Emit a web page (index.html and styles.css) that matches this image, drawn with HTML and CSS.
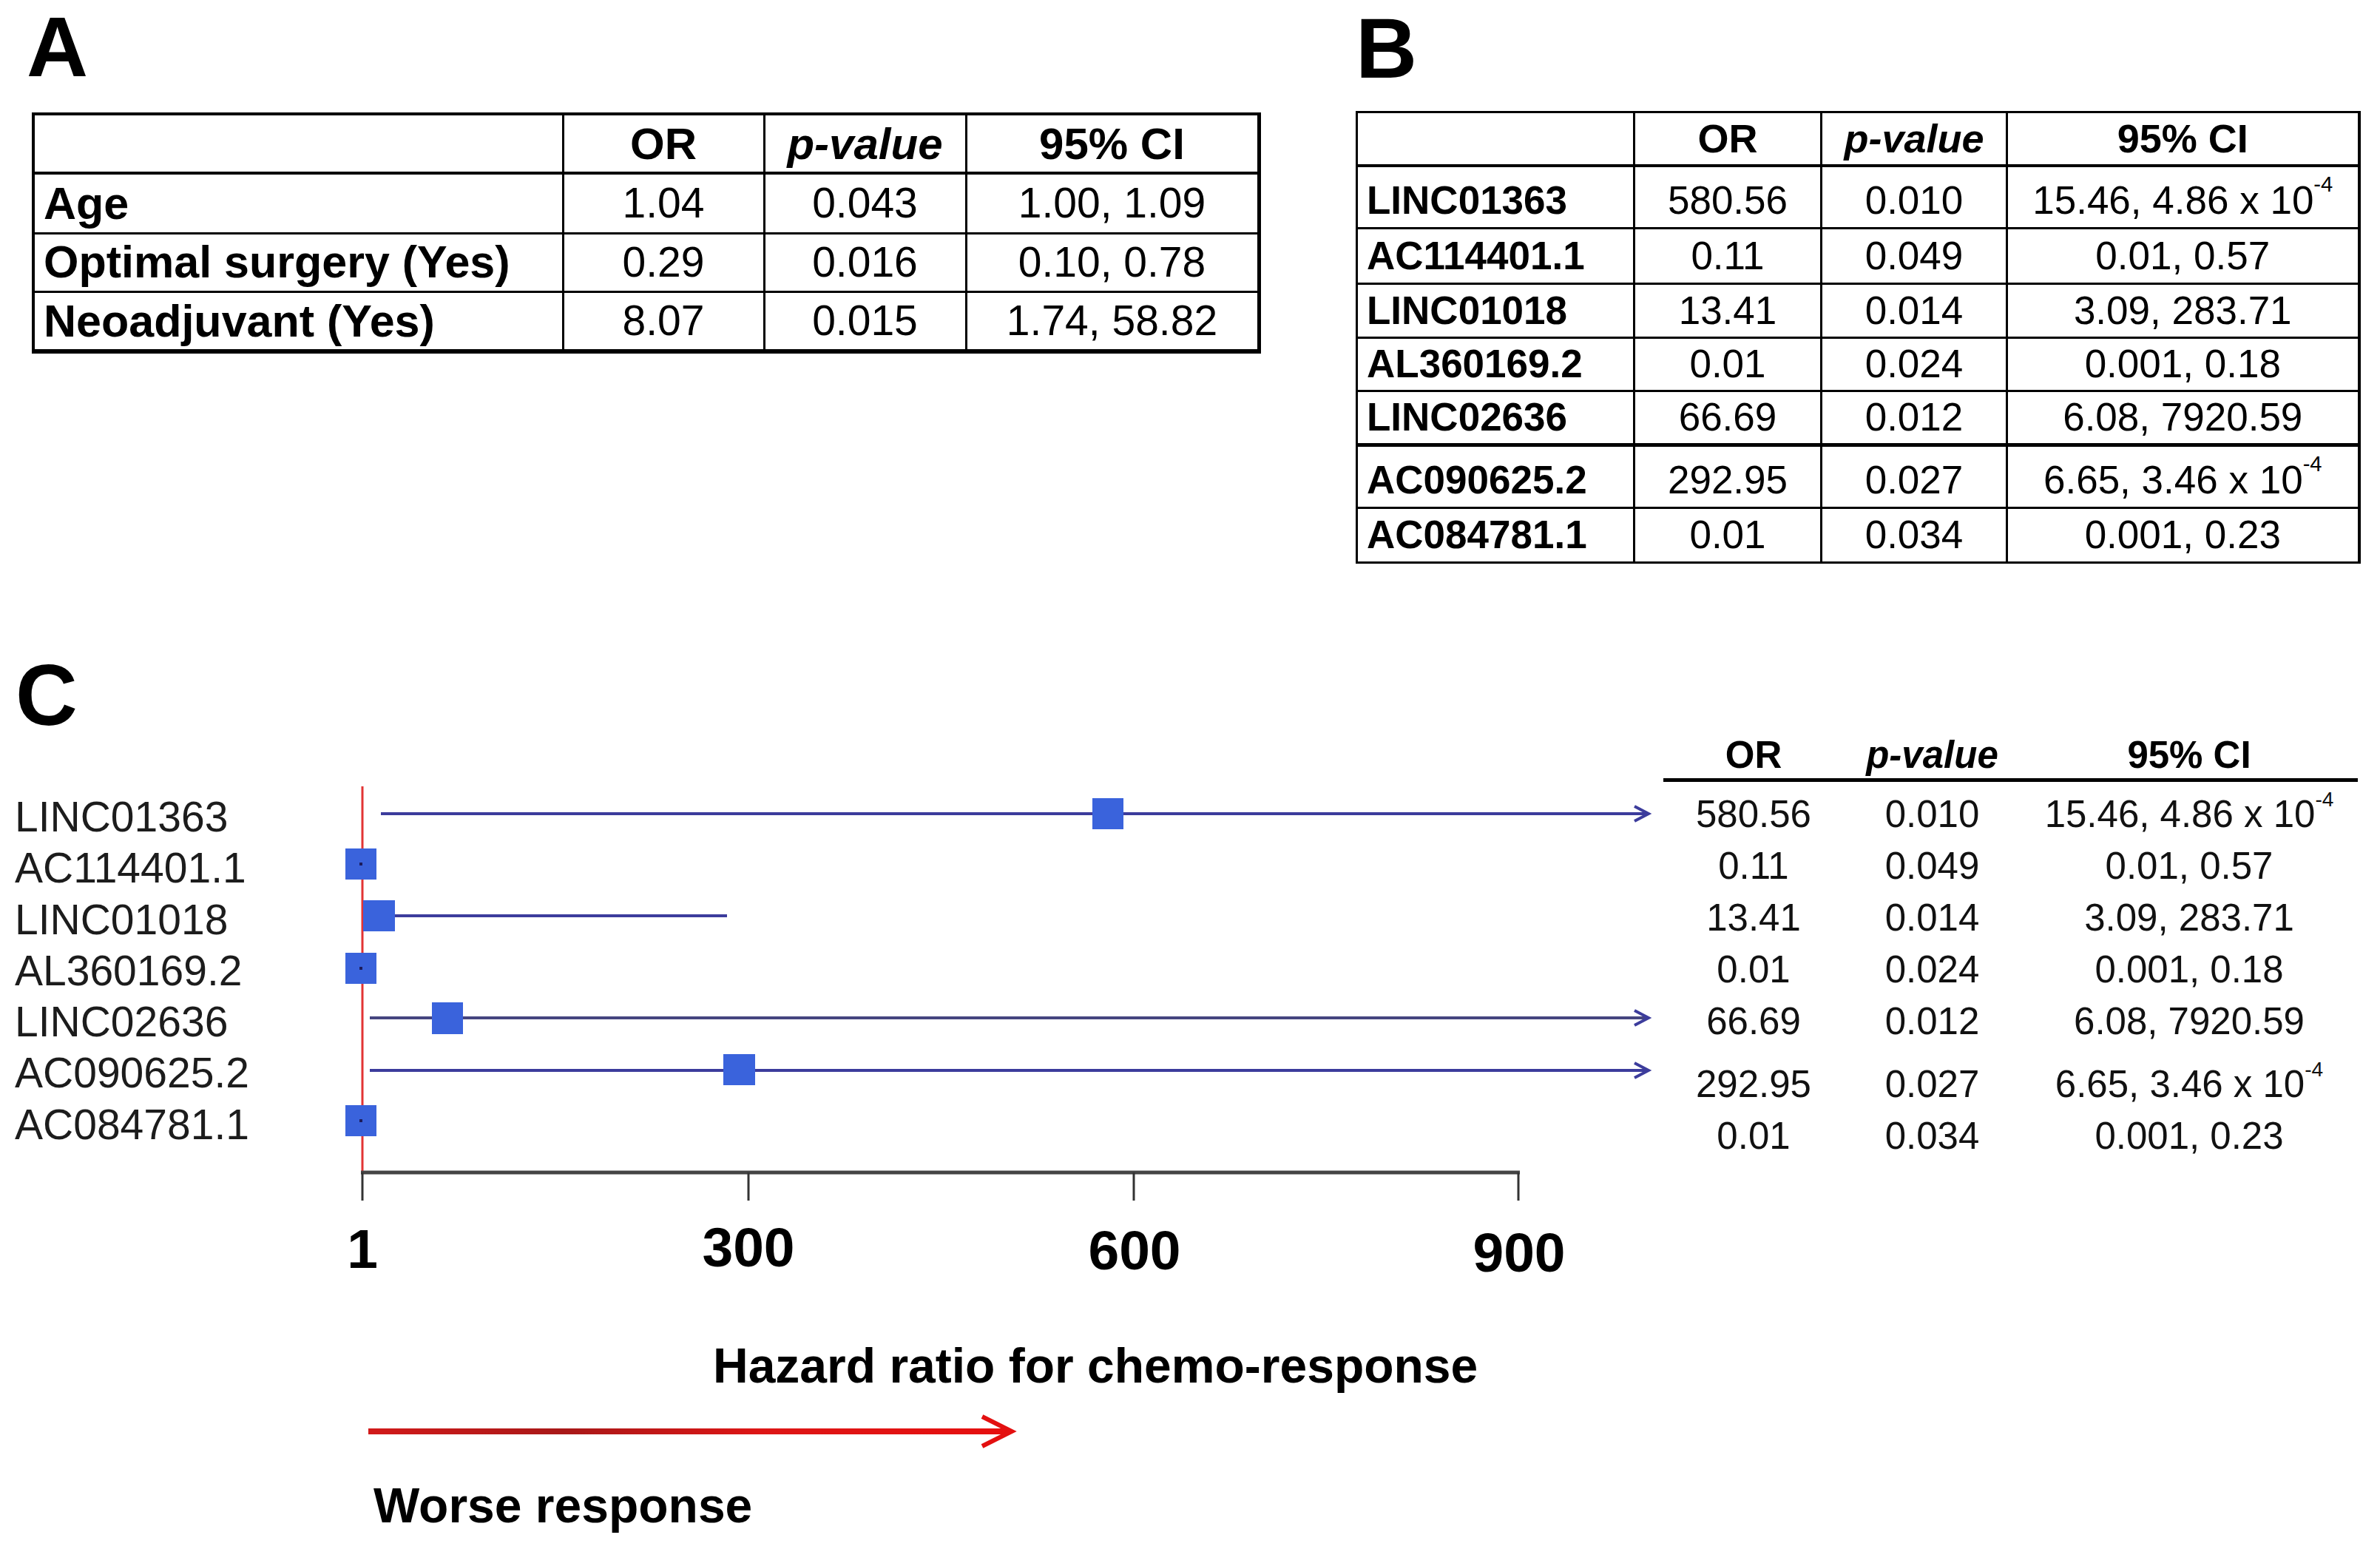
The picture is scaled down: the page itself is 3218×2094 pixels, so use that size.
FILE: index.html
```html
<!DOCTYPE html>
<html lang="en">
<head>
<meta charset="utf-8">
<title>Odds ratios and forest plot</title>
<link rel="stylesheet" href="styles.css">
</head>
<body>
<div class="top">
  <section class="panel-a">
    <div class="letter">A</div>
    <table class="tbl tbl-a">
      <colgroup><col class="ca1"><col class="ca2"><col class="ca3"><col class="ca4"></colgroup>
      <thead>
        <tr class="ha"><th></th><th>OR</th><th class="it">p-value</th><th>95% CI</th></tr>
      </thead>
      <tbody>
        <tr class="ra1"><td class="lbl">Age</td><td>1.04</td><td>0.043</td><td>1.00, 1.09</td></tr>
        <tr class="ra2"><td class="lbl">Optimal surgery (Yes)</td><td>0.29</td><td>0.016</td><td>0.10, 0.78</td></tr>
        <tr class="ra3"><td class="lbl">Neoadjuvant (Yes)</td><td>8.07</td><td>0.015</td><td>1.74, 58.82</td></tr>
      </tbody>
    </table>
  </section>
  <section class="panel-b">
    <div class="letter">B</div>
    <table class="tbl tbl-b">
      <colgroup><col class="cb1"><col class="cb2"><col class="cb3"><col class="cb4"></colgroup>
      <thead>
        <tr class="hb"><th></th><th>OR</th><th class="it">p-value</th><th>95% CI</th></tr>
      </thead>
      <tbody>
        <tr class="rb1 suprow"><td class="lbl">LINC01363</td><td>580.56</td><td>0.010</td><td>15.46, 4.86 x 10<span class="sup">-4</span></td></tr>
        <tr class="rb2"><td class="lbl">AC114401.1</td><td>0.11</td><td>0.049</td><td>0.01, 0.57</td></tr>
        <tr class="rb3"><td class="lbl">LINC01018</td><td>13.41</td><td>0.014</td><td>3.09, 283.71</td></tr>
        <tr class="rb4"><td class="lbl">AL360169.2</td><td>0.01</td><td>0.024</td><td>0.001, 0.18</td></tr>
        <tr class="rb5"><td class="lbl">LINC02636</td><td>66.69</td><td>0.012</td><td>6.08, 7920.59</td></tr>
        <tr class="rb6 suprow thick"><td class="lbl">AC090625.2</td><td>292.95</td><td>0.027</td><td>6.65, 3.46 x 10<span class="sup">-4</span></td></tr>
        <tr class="rb7"><td class="lbl">AC084781.1</td><td>0.01</td><td>0.034</td><td>0.001, 0.23</td></tr>
      </tbody>
    </table>
  </section>
</div>

<section class="panel-c">
  <div class="letter">C</div>
  <div class="chart-row">
    <div class="labels">
      <div>LINC01363</div>
      <div>AC114401.1</div>
      <div>LINC01018</div>
      <div>AL360169.2</div>
      <div>LINC02636</div>
      <div>AC090625.2</div>
      <div>AC084781.1</div>
    </div>
    <svg class="plot" width="1809" height="743" viewBox="0 0 1809 743" xmlns="http://www.w3.org/2000/svg">
      <line class="ref" x1="50" y1="65" x2="50" y2="587"/>
      <!-- LINC01363 -->
      <line class="ci" x1="75" y1="102" x2="1787" y2="102"/>
      <polyline class="ci-head" points="1770,92 1789,102 1770,112"/>
      <rect class="pt" x="1037" y="81" width="42" height="42"/>
      <!-- AC114401.1 -->
      <rect class="pt" x="27" y="149" width="42" height="42"/>
      <rect class="dot" x="46" y="168" width="4" height="4"/>
      <!-- LINC01018 -->
      <line class="ci" x1="73" y1="240" x2="543" y2="240"/>
      <rect class="pt" x="51" y="219" width="43" height="42"/>
      <!-- AL360169.2 -->
      <rect class="pt" x="27" y="290" width="42" height="42"/>
      <rect class="dot" x="46" y="309" width="4" height="4"/>
      <!-- LINC02636 -->
      <line class="ci ci-grey" x1="60" y1="378" x2="1787" y2="378"/>
      <polyline class="ci-head" points="1770,368 1789,378 1770,388"/>
      <rect class="pt" x="144" y="357" width="42" height="43"/>
      <!-- AC090625.2 -->
      <line class="ci" x1="60" y1="449" x2="1787" y2="449"/>
      <polyline class="ci-head" points="1770,439 1789,449 1770,459"/>
      <rect class="pt" x="538" y="427" width="43" height="42"/>
      <!-- AC084781.1 -->
      <rect class="pt" x="27" y="496" width="42" height="42"/>
      <rect class="dot" x="46" y="515" width="4" height="4"/>
      <!-- axis -->
      <line class="axis" x1="48" y1="587" x2="1615" y2="587"/>
      <line class="tickline" x1="50" y1="587" x2="50" y2="625"/>
      <line class="tickline" x1="572" y1="587" x2="572" y2="625"/>
      <line class="tickline" x1="1093" y1="587" x2="1093" y2="625"/>
      <line class="tickline" x1="1613" y1="587" x2="1613" y2="625"/>
      <text class="tick" x="50" y="716">1</text>
      <text class="tick" x="572" y="714">300</text>
      <text class="tick" x="1094" y="718">600</text>
      <text class="tick" x="1614" y="721">900</text>
    </svg>
    <table class="ctbl">
      <colgroup><col class="cc1"><col class="cc2"><col class="cc3"></colgroup>
      <thead>
        <tr><th>OR</th><th class="it">p-value</th><th>95% CI</th></tr>
      </thead>
      <tbody>
        <tr class="first"><td>580.56</td><td>0.010</td><td>15.46, 4.86 x 10<span class="sup">-4</span></td></tr>
        <tr><td>0.11</td><td>0.049</td><td>0.01, 0.57</td></tr>
        <tr><td>13.41</td><td>0.014</td><td>3.09, 283.71</td></tr>
        <tr><td>0.01</td><td>0.024</td><td>0.001, 0.18</td></tr>
        <tr><td>66.69</td><td>0.012</td><td>6.08, 7920.59</td></tr>
        <tr class="tall"><td>292.95</td><td>0.027</td><td>6.65, 3.46 x 10<span class="sup">-4</span></td></tr>
        <tr><td>0.01</td><td>0.034</td><td>0.001, 0.23</td></tr>
      </tbody>
    </table>
  </div>
  <div class="axis-title">Hazard ratio for chemo-response</div>
  <svg class="worse-arrow" width="880" height="50" viewBox="0 0 880 50" xmlns="http://www.w3.org/2000/svg">
    <defs>
      <linearGradient id="redgrad" gradientUnits="userSpaceOnUse" x1="0" y1="0" x2="880" y2="0">
        <stop offset="0" stop-color="#d21a1a"/>
        <stop offset="0.3" stop-color="#a81818"/>
        <stop offset="0.6" stop-color="#dd1616"/>
        <stop offset="1" stop-color="#e60f0f"/>
      </linearGradient>
    </defs>
    <line class="warrow-line" x1="0" y1="25" x2="866" y2="25"/>
    <polyline class="warrow-head" points="830,5 870,25 830,45"/>
  </svg>
  <div class="worse">Worse response</div>
</section>
</body>
</html>
```

FILE: styles.css
```css
* { box-sizing: border-box; }

html, body {
  margin: 0;
  padding: 0;
  background: #ffffff;
}

body {
  width: 3218px;
  font-family: "Liberation Sans", Arial, Helvetica, sans-serif;
  color: #000;
}

.letter {
  font-weight: bold;
  font-size: 115px;
  line-height: 115px;
  height: 115px;
}

/* ---------- top row: panels A and B ---------- */
.top {
  display: flex;
  align-items: flex-start;
  padding-left: 36px;
}

.panel-a {
  flex: none;
  width: 1667px;
}

.panel-a .letter { margin-top: 6px; }

.panel-b {
  flex: none;
  width: 1356px;
  margin-left: 130px;
}

.panel-b .letter { margin-top: 8px; }

.tbl {
  border-collapse: collapse;
  table-layout: fixed;
}

.tbl th,
.tbl td {
  padding: 0;
  border: 3px solid #000;
  text-align: center;
  vertical-align: middle;
  line-height: 1.15;
  white-space: nowrap;
}

.tbl .lbl {
  text-align: left;
  font-weight: bold;
  padding-left: 12px;
}

.it { font-style: italic; }

/* table A */
.tbl-a {
  width: 1657px;
  margin: 31px 0 0 7px;
  border-top: 4px solid #000;
  border-left: 4px solid #000;
  border-right: 5px solid #000;
  border-bottom: 6px solid #000;
}

.ca1 { width: 716px; }
.ca2 { width: 272px; }
.ca3 { width: 273px; }
.ca4 { width: 396px; }

.tbl-a th {
  font-size: 60px;
  border-bottom: 4px solid #000;
}

.tbl-a td { font-size: 57px; }
.tbl-a td.lbl { font-size: 61px; }

.tbl-a .ha { height: 80px; }
.tbl-a .ra1 { height: 81px; }
.tbl-a .ra2 { height: 79px; }
.tbl-a .ra3 { height: 81px; }

/* table B */
.tbl-b {
  width: 1355px;
  margin-top: 27px;
  border: 3px solid #000;
  border-right-width: 4px;
}

.cb1 { width: 375px; }
.cb2 { width: 253px; }
.cb3 { width: 251px; }
.cb4 { width: 476px; }

.tbl-b th {
  font-size: 54px;
  border-bottom: 4px solid #000;
}

.tbl-b td { font-size: 53px; }

.tbl-b .suprow td { padding-top: 10px; }
.tbl-b .thick td { border-top: 5px solid #000; }

.tbl-b .hb { height: 72px; }
.tbl-b .rb1 { height: 85px; }
.tbl-b .rb2 { height: 75px; }
.tbl-b .rb3 { height: 73px; }
.tbl-b .rb4 { height: 72px; }
.tbl-b .rb5 { height: 73px; }
.tbl-b .rb6 { height: 85px; }
.tbl-b .rb7 { height: 74px; }

.sup {
  font-size: 0.55em;
  line-height: 0;
  vertical-align: 30px;
}

/* ---------- panel C ---------- */
.panel-c { margin-top: 120px; }

.panel-c .letter {
  font-size: 116px;
  line-height: 116px;
  height: 116px;
  padding-left: 21px;
}

.chart-row {
  display: flex;
  align-items: flex-start;
  padding-left: 20px;
}

.labels {
  flex: none;
  width: 420px;
  margin-top: 72px;
}

.labels div {
  font-size: 57px;
  line-height: 69.3px;
  height: 69.3px;
  color: #1c1c1c;
  white-space: nowrap;
}

.plot {
  flex: none;
  display: block;
  width: 1809px;
  height: 743px;
}

.ref { stroke: #e23434; stroke-width: 3; }
.ci { stroke: #3c3c9c; stroke-width: 4; }
.ci-grey { stroke: #45457f; }
.ci-head { fill: none; stroke: #3c3c9c; stroke-width: 4; stroke-linejoin: miter; }
.pt { fill: #3a63dc; }
.dot { fill: #1c1c5c; }
.axis { stroke: #444444; stroke-width: 5; }
.tickline { stroke: #333333; stroke-width: 3; }

.tick {
  font-family: "Liberation Sans", Arial, sans-serif;
  font-weight: bold;
  font-size: 75px;
  text-anchor: middle;
  fill: #000;
}

/* right-hand table of panel C */
.ctbl {
  flex: none;
  width: 939px;
  border-collapse: collapse;
  table-layout: fixed;
}

.cc1 { width: 244px; }
.cc2 { width: 239px; }
.cc3 { width: 456px; }

.ctbl th {
  font-size: 51px;
  font-weight: bold;
  line-height: 46px;
  padding: 0 0 8px;
  border-bottom: 5px solid #000;
  text-align: center;
  white-space: nowrap;
}

.ctbl td {
  font-size: 51px;
  line-height: 70px;
  height: 70px;
  padding: 0;
  text-align: center;
  vertical-align: top;
  white-space: nowrap;
  color: #111;
}

.ctbl .first td { padding-top: 9px; height: 79px; }
.ctbl .tall td { padding-top: 15px; height: 85px; }
.ctbl .sup { vertical-align: 28px; }

.axis-title {
  font-weight: bold;
  font-size: 66px;
  line-height: 80px;
  margin: 65px 0 0 964px;
  white-space: nowrap;
}

.worse-arrow {
  display: block;
  margin: 24px 0 0 498px;
}

.warrow-line { stroke: url(#redgrad); stroke-width: 8; }
.warrow-head { fill: none; stroke: #e31010; stroke-width: 6; }

.worse {
  font-weight: bold;
  font-size: 66px;
  line-height: 80px;
  margin: 35px 0 0 505px;
  white-space: nowrap;
}
```
